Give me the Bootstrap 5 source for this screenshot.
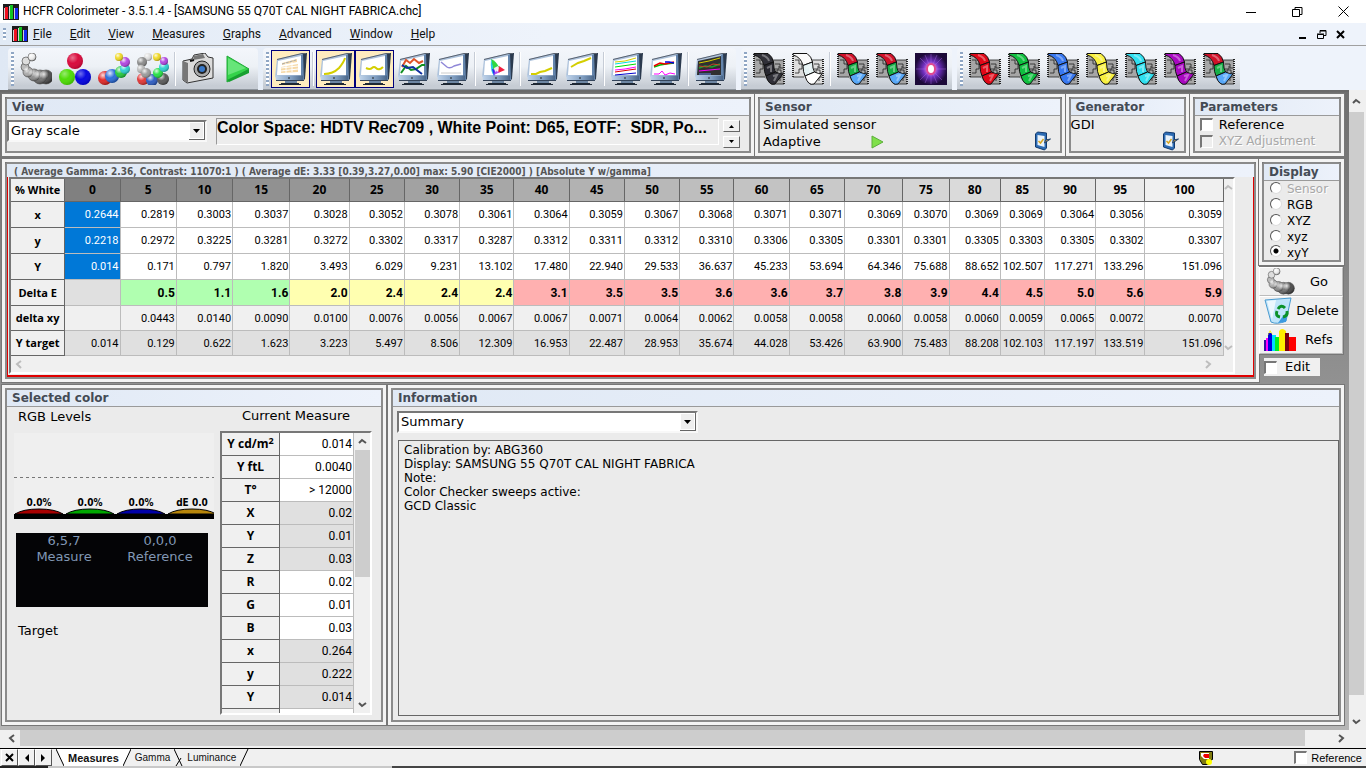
<!DOCTYPE html>
<html lang="en">
<head>
<meta charset="utf-8">
<meta name="viewport" content="width=device-width, initial-scale=1">
<title>HCFR Colorimeter</title>
<link rel="stylesheet" href="https://cdn.jsdelivr.net/npm/bootstrap@5.3.0/dist/css/bootstrap.min.css">
<script src="https://cdn.jsdelivr.net/npm/bootstrap@5.3.0/dist/js/bootstrap.bundle.min.js"></script>
<style>
:root{--ui:Roboto,"Open Sans",sans-serif;--wide:"DejaVu Sans",sans-serif}
body{font:12px/16px var(--ui);color:#000;background:#f0f0f0;overflow:hidden}
button{font:inherit;color:inherit;padding:0;border:0;background:none}
svg{display:block;flex:none}
.titlebar{height:23px;background:#fff;padding-left:3px}
.titlebar h1{font:12px/23px var(--ui);margin:0 0 0 4px}
.winbtn{width:46px;height:22px}
.menubar{height:22px;background:linear-gradient(90deg,#e1eaf5,#eef3fb 40%)}
.menubar .nav{gap:18px;margin-left:5px}
.menubar a{color:#111;text-decoration:none;line-height:24px}
.menubar a::first-letter{text-decoration:underline}
.menubar .grip{height:12px}
.mdibtn{width:19px;height:20px}
.toolbars{height:45px;gap:5px;padding:2px 0 0 8px;border-top:1px solid #a0a0a0;background:linear-gradient(90deg,#dfe8f4,#eef3fb 40%)}
.toolgroup{height:42px;padding-right:2px;border-radius:4px 4px 0 0;background:linear-gradient(#f3f6fb,#edf1f6 45%,#c6ccd4 92%);border-bottom:1px solid #8e959d}
.toolgroup:nth-child(2){padding-right:6px}
.grip{width:3px;height:34px;margin:0 2px 0 3px;background:repeating-linear-gradient(#8fa6c4 0 2px,#fff 2px 4px)}
.toolbtn{width:39px;height:38px;border:1px solid transparent}
.toolbtn.pressed{background:#ffecbf;border-color:#00007b}
.toolsep{width:2px;height:34px;margin:0 2px;border-left:1px solid #c6ccd6;border-right:1px solid #fff}
.workspace{background:linear-gradient(#6f6f6f,#8a8a8a 35%,#b6b6b6);border-top:2px solid #6a6a6a;padding:2px 5px 5px 2px;gap:3px}
.toprow{display:grid;grid-template-columns:751fr 309fr 123fr 154fr;gap:1px}
.sheet{border:3px solid #f4f4f4;outline:1px solid #777;min-width:0}
.inner{border:2px solid #8b8b8b;border-radius:4px 4px 0 0;background:#ebebeb;width:100%;min-width:0}
.inner>h2{font:bold 12px/16px var(--wide);color:#444b55;margin:0;padding-left:5px;height:17px;background:linear-gradient(90deg,#e0e9f5,#edf2fb);border-bottom:1px solid #9a9a9a;white-space:nowrap}
.wide{font-family:var(--wide);font-size:13px}
.body1{height:35px}
.sensorlines span{line-height:17px}
.combo{appearance:none;border:2px solid;border-color:#777 #f8f8f8 #f8f8f8 #777;border-radius:0;height:22px;padding:0 20px 0 2px;font:13px/16px var(--wide);color:#000;background:#fff url("data:image/svg+xml,%3Csvg xmlns='http://www.w3.org/2000/svg' width='16' height='18'%3E%3Crect width='16' height='18' fill='%23666'/%3E%3Crect width='15' height='17' fill='%23fff'/%3E%3Crect x='1' y='1' width='13' height='15' fill='%23eee'/%3E%3Cpath d='M4 7h7L7.500 11z'/%3E%3C/svg%3E") right 0 top 0 no-repeat}
.spacefield{border:1px solid;border-color:#999 #fff #fff #999;border-radius:0;background:#ededed;font:bold 16px/18px "Liberation Sans",sans-serif;height:27px;padding:0 0 8px;width:503px;margin:2px 0 0 9px}
.spin button{width:17px;height:12px;border:1px solid;border-color:#fff #666 #666 #fff;background:#f0f0f0}
input[type=checkbox].box{appearance:none;width:13px;height:13px;border:2px solid;border-width:2px 1px 1px 2px;border-color:#777 #fff #fff #777;background:#fff;margin:0;flex:none}
input.box:disabled{background:#eee!important}
.dim{color:#a8a8a8;text-shadow:1px 1px #fff}
.params label{gap:6px;padding-left:5px;line-height:17px;white-space:nowrap}
.params .dim{font-size:12px}
.inner.datapanel>h2{font:bold 10px/15px "DejaVu Sans Condensed",sans-serif;height:13px;padding-left:7px;border:0;overflow:hidden;color:#555}
.redframe{border:solid #e00000;border-width:0 1px 2px 1px;padding:0 18px 1px 1px}
.gridbox{border:2px solid;border-color:#777 #fff #fff #777;background:#f0f0f0}
.meas{table-layout:fixed;width:100%;border-collapse:separate;border-spacing:0}
.meas th{font:bold 11px/16px "Open Sans",sans-serif;text-align:center;padding:0;border:solid #666;border-width:0 1px 1px 0;background:#f0f0f0;white-space:nowrap}
.meas td{font:11px/16px var(--ui);text-align:right;padding:1px 1px 0 0;border:solid #bcbcbc;border-width:0 1px 1px 0;background:#fff;white-space:nowrap}
.meas thead th{font-size:12px}
.bigtable thead th:first-child{font-size:11px}
.bigtable thead tr{height:23px}
.bigtable tbody tr{height:26px}
.bigtable tbody tr:nth-child(n+5){height:25px}
.bigtable .sel{background:#0078d7;color:#fff}
.bigtable .good{background:#b0ffb0;font:bold 12px/16px var(--ui)}
.bigtable .fair{background:#ffffb0;font:bold 12px/16px var(--ui)}
.bigtable .poor{background:#ffb0b0;font:bold 12px/16px var(--ui)}
.bigtable .soft{background:#f0f0f0}
.bigtable .shade,.smalltable .shade{background:#e0e0e0}
.chev{fill:none;stroke:#bdbdbd;stroke-width:2}
.chev.on{stroke:#555}
.sidebar{width:85px;flex:none}
.radios label{height:16px;font:12px/16px var(--wide);gap:5px;padding-left:6px}
.radios label:last-child{height:15px}
.radios input{appearance:none;width:12px;height:12px;border-radius:50%;border:1px solid;border-color:#555 #ddd #ddd #555;background:#fff;margin:0 0 3px}
.radios input:checked{background:radial-gradient(circle,#000 0 2px,#fff 3px)}
.actions{margin-top:1px;border:1px solid #777;border-left:0}
.actions button{width:100%;height:29px;background:#f0f0f0;border:1px solid;border-color:#fff #bbb #bbb #fff;padding-left:4px;font:13px/16px var(--wide)}
.editbox{background:#f0f0f0;height:18px;width:56px;margin:3px 0 0 5px;font:13px/18px var(--wide)}
.leftpanel{width:384px}
.levels{padding:2px 9px 0 7px}
.swatch{width:192px;height:74px;margin:14px 0 0 2px;background:#040406;color:#8197b4;font:13px/16px var(--wide)}
.smallbox{width:152px;height:284px;border:2px solid;border-color:#777 #fff #fff #777;background:#f0f0f0;overflow:hidden}
.smalltable{width:132px;flex:none;align-self:flex-start}
.smalltable tr{height:23px}
.smalltable th{width:58px;font-size:12px}
.smalltable td{font-size:12px;padding:0 1px 1px 0}
.smalltable sup{font-size:9px;line-height:0}
.thumb{background:#cdcdcd}
.notes{resize:none;border:1px solid #666;border-radius:0;background:#ebebeb;font:12px/14px var(--wide);padding:2px 5px;margin:7px 0 4px 5px;outline:0}
.hbar{height:16px;margin-bottom:2px}
.tabs{height:18px;border-top:1px solid #000;background:#f0f0f0;font:11px/16px "Liberation Sans",sans-serif;padding-left:1px}
.tabs .sq{width:17px;height:17px;border:1px solid;border-color:#fff #555 #555 #fff;display:grid;place-items:center}
.sheettab{height:17px;color:#111;text-decoration:none;font-size:10px;line-height:18px}
.sheettab.active{background:#fff;font-weight:bold;font-size:11px}
.taskedge{height:2px;background:linear-gradient(90deg,#222 48px,#c8c8c8 48px 392px,#444 392px)}
</style>
</head>
<body class="d-flex flex-column vh-100">
<svg width="0" height="0" class="position-absolute" aria-hidden="true">
<defs>
<linearGradient id="bez" x1="0" x2="1"><stop offset="0" stop-color="#c3d6ec"/><stop offset=".6" stop-color="#7f9dc0"/><stop offset="1" stop-color="#4a6688"/></linearGradient>
<radialGradient id="ball" cx=".35" cy=".3" r=".7"><stop offset="0" stop-color="#fff" stop-opacity=".85"/><stop offset=".5" stop-color="#fff" stop-opacity=".05"/><stop offset="1" stop-color="#000" stop-opacity=".3"/></radialGradient>
<symbol id="logo" viewBox="0 0 16 16"><path fill="#1c1c1c" d="M0 0h16v16H0z"/><path fill="#fff" d="M1 4h1v11H1zM6 2h1v13H6zM11 4h1v11h-1z" opacity=".8"/><path fill="#f01020" d="M2 3h3v12H2z"/><path fill="#12c422" d="M7 1h3v14H7z"/><path fill="#1428f0" d="M12 4h3v11h-3z"/></symbol>
<symbol id="mon" viewBox="0 0 32 32"><path fill="#aec3dc" d="M2 6 27 0v24H0z"/><path fill="#6485ad" d="M26 2 29 0v27h-3z"/><path fill="#2b3a4e" d="M28 0h4l-2 26-1 1z"/><path fill="var(--screen,#fff)" d="M3 8 26 3v19H2z"/><path d="M2 6.500 27 .5h4" stroke="#59616e" fill="none"/><path fill="url(#bez)" d="M0 22.500h28V27H1z"/><path d="M1 27.500h28" stroke="#33445a"/><path fill="#567" d="M13 24h2v2h-2z"/><path fill="#6d86a3" d="M10 28h12v2H10z"/><path fill="#1d2733" d="M6 30h18v1H6zM4 31h22v1H4z"/></symbol>
<symbol id="film" viewBox="0 0 32 32"><path fill="var(--back,#a6a6a6)" d="M1 2h10l9 5h11v24H18l-7-7H1z"/><path fill="none" stroke="#222" stroke-width="2" stroke-dasharray="1 1" d="M1 1v24M31 6v26"/><path fill="none" stroke="#222" stroke-width=".8" d="M3 7h4v4h3v5H7v4H3M20 7h11M22 11h5v4h3M22 16h4v-3M24 20v-3h4v3h3M27 28v-4h3M1 24h11M18 31h13"/><path fill="var(--c1)" stroke="#111" d="M1 .5h14q4.500 3 5.500 8.500L11 12.500Q9 4 1 2z"/><path fill="var(--c2)" stroke="#111" d="M11 12.500 20.500 9q0 7 2 10L13 23q-2-4-2-10.500z"/><path fill="var(--c3)" stroke="#111" d="m13 23 9.500-4q4 2 7.500 2-4 5-8 10-6 2-9-8z"/><path d="m14 15 4-2v6M20 23l4-1-3 6M9 2q6 2 7 6" stroke="#fff" opacity=".35" stroke-width="2" fill="none"/></symbol>
<symbol id="grayballs" viewBox="0 0 32 32"><g stroke="#555" stroke-width=".7"><circle cx="26" cy="24" r="7" fill="#444"/><circle cx="20" cy="24" r="7" fill="#666"/><circle cx="14" cy="22" r="6" fill="#888"/><circle cx="8" cy="19" r="5" fill="#aaa"/><circle cx="5" cy="14" r="4" fill="#bbb"/><circle cx="6" cy="8" r="4" fill="#ddd"/><circle cx="12" cy="4" r="4" fill="#eee"/></g><g fill="url(#ball)"><circle cx="26" cy="24" r="7"/><circle cx="20" cy="24" r="7"/><circle cx="14" cy="22" r="6"/><circle cx="8" cy="19" r="5"/><circle cx="12" cy="4" r="4"/></g></symbol>
<symbol id="clip" viewBox="0 0 18 20"><path fill="#2d6cb4" stroke="#123a6e" d="m2 3 2-2 9 1v15l-2 2-9-3z"/><path fill="#eaf3fb" d="m4 4 7 1v11l-7-2z"/><path d="m5 10 2 2 3-4" fill="none" stroke="#d9a520" stroke-width="1.500"/><path d="m17 8-6 4 1-3z" fill="#c94" stroke="#24456e"/></symbol>
</defs>
</svg>

<header>
<div class="titlebar d-flex align-items-center">
<svg width="16" height="16"><use href="#logo"/></svg><h1>HCFR Colorimeter - 3.5.1.4 - [SAMSUNG 55 Q70T CAL NIGHT FABRICA.chc]</h1>
<div class="ms-auto d-flex">
<button class="winbtn" aria-label="Minimize"><svg class="mx-auto" width="10" height="10"><path d="M0 5.500h10" stroke="#000"/></svg></button>
<button class="winbtn" aria-label="Restore"><svg class="mx-auto" width="11" height="10" fill="none" stroke="#000"><path d="M.5 2.500h7v7h-7zM3 2V.5h7v7H8"/></svg></button>
<button class="winbtn" aria-label="Close"><svg class="mx-auto" width="11" height="11" stroke="#000"><path d="m.5.5 10 10m0-10-10 10"/></svg></button>
</div>
</div>
<div class="menubar d-flex align-items-center">
<div class="grip"></div>
<svg class="ms-1" width="16" height="16"><use href="#logo"/></svg>
<nav class="nav"><a class="d-block" href="#">File</a><a class="d-block" href="#">Edit</a><a class="d-block" href="#">View</a><a class="d-block" href="#">Measures</a><a class="d-block" href="#">Graphs</a><a class="d-block" href="#">Advanced</a><a class="d-block" href="#">Window</a><a class="d-block" href="#">Help</a></nav>
<div class="ms-auto d-flex pe-3">
<button class="mdibtn" aria-label="Minimize document"><svg class="mx-auto" width="9" height="9"><path d="M1 8h7" stroke="#000" stroke-width="2"/></svg></button>
<button class="mdibtn" aria-label="Restore document"><svg class="mx-auto" width="10" height="9" fill="none" stroke="#000"><path d="M.5 4.500h6v4h-6zM0 4h7M3 3V.5h6v5H7M3 1h6" /></svg></button>
<button class="mdibtn" aria-label="Close document"><svg class="mx-auto" width="9" height="9" stroke="#000" stroke-width="2"><path d="m1 1 7 7m0-7-7 7"/></svg></button>
</div>
</div>
<div class="toolbars d-flex" id="toolbars"></div>
</header>

<main class="d-flex flex-grow-1" style="min-height:0">
<div class="d-flex flex-column flex-grow-1" style="min-width:0">
<div class="workspace d-flex flex-column flex-grow-1">

<div class="toprow">
<section class="sheet d-flex"><div class="inner"><h2>View</h2>
<div class="body1 d-flex align-items-start"><select class="combo mt-1" style="width:200px" aria-label="View"><option>Gray scale</option></select>
<input class="spacefield" aria-label="Color space" readonly value="Color Space: HDTV Rec709 , White Point: D65, EOTF:  SDR, Po...">
<div class="spin d-flex flex-column mt-1 ms-1"><button aria-label="Up"><svg class="mx-auto" width="7" height="4"><path d="M1 4h5L3.500 1z"/></svg></button><button class="mt-1" aria-label="Down"><svg class="mx-auto" width="7" height="4"><path d="M1 0h5L3.500 3z"/></svg></button></div></div></div></section>
<section class="sheet d-flex"><div class="inner"><h2>Sensor</h2>
<div class="body1 wide d-flex justify-content-between" style="padding-left:3px"><div class="sensorlines d-flex flex-column"><span>Simulated sensor</span><span class="d-flex align-items-center">Adaptive<svg style="margin-left:50px" width="14" height="14"><path d="M1 1v12l11-6z" fill="#7fe04a" stroke="#5cae3b"/></svg></span></div><button class="align-self-end pe-2" aria-label="Configure sensor"><svg width="19" height="20"><use href="#clip"/></svg></button></div></div></section>
<section class="sheet d-flex"><div class="inner"><h2>Generator</h2>
<div class="body1 sensorlines wide d-flex justify-content-between"><span>GDI</span><button class="align-self-end pe-1" aria-label="Configure generator"><svg width="19" height="20"><use href="#clip"/></svg></button></div></div></section>
<section class="sheet d-flex"><div class="inner"><h2>Parameters</h2>
<div class="body1 params wide d-flex flex-column"><label class="d-flex align-items-center"><input type="checkbox" class="box">Reference</label><label class="d-flex align-items-center dim"><input type="checkbox" class="box" disabled>XYZ Adjustment</label></div></div></section>
</div>

<div class="d-flex">
<section class="sheet d-flex flex-grow-1"><div class="inner datapanel"><h2>( Average Gamma: 2.36, Contrast: 11070:1 ) ( Average dE: 3.33 [0.39,3.27,0.00] max: 5.90 [CIE2000] ) [Absolute Y w/gamma]</h2>
<div class="redframe"><div class="gridbox"><div class="d-flex"><div class="flex-grow-1" style="min-width:0"><table class="meas bigtable"><colgroup id="cols"></colgroup><thead><tr id="head"></tr></thead><tbody id="rows"></tbody></table></div>
<div class="d-flex flex-column justify-content-between align-items-center py-1" style="width:18px"><svg class="chev" width="9" height="9"><path d="m1 6 3-3 4 3"/></svg><svg class="chev" width="9" height="9"><path d="m1 3 3 3 4-3"/></svg></div></div>
<div class="d-flex justify-content-between align-items-center ps-1" style="height:16px;padding-right:21px"><svg class="chev" width="8" height="9"><path d="M6 1 2 4l4 4"/></svg><svg class="chev" width="8" height="9"><path d="m2 1 4 3-4 4"/></svg></div>
</div></div></div></section>
<aside class="sidebar">
<div class="sheet d-flex"><div class="inner radios"><h2>Display</h2>
<label class="d-flex align-items-center dim"><input type="radio" name="disp" disabled>Sensor</label>
<label class="d-flex align-items-center"><input type="radio" name="disp">RGB</label>
<label class="d-flex align-items-center"><input type="radio" name="disp">XYZ</label>
<label class="d-flex align-items-center"><input type="radio" name="disp">xyz</label>
<label class="d-flex align-items-center"><input type="radio" name="disp" checked>xyY</label></div></div>
<div class="actions">
<button class="d-flex align-items-center"><svg width="32" height="27"><use href="#grayballs"/></svg><span class="mx-auto">Go</span></button>
<button class="d-flex align-items-center"><svg width="29" height="27" viewBox="0 0 29 27"><path fill="#bfe4fa" stroke="#4a9bd0" d="m1 3 26-2-5 23q-9 4-15 1z"/><path fill="#fff" opacity=".7" d="m3 4 9-1-4 20z"/><path fill="#3d9be0" d="m19 19 4-3-1 9-8 1z"/><path d="M14 12q3-5 7-1M23 14q1 5-4 6M16 20q-5-1-3-6" stroke="#0b9128" stroke-width="3" fill="none"/></svg><span class="mx-auto">Delete</span></button>
<button class="d-flex align-items-center"><svg width="32" height="23" viewBox="0 0 32 23"><path fill="#3010a0" d="M0 12h3v11H0z"/><path fill="#f0f" d="M2 10h3v13H2z"/><path fill="#00d" d="M4 5h4v18H4z"/><path fill="#0df" d="M8 7h4v16H8z"/><path fill="#0e2" d="M11 9h4v14h-4z"/><path fill="#fe0" d="M3 9 6 2l3 5-3-3zM15 3q3-4 7 0v20h-7z"/><path fill="#7a0010" d="M21 5h4v18h-4z"/><path fill="#f00" d="M25 9h7v14h-7z"/></svg><span class="mx-auto">Refs</span></button>
</div>
<label class="editbox d-flex align-items-center"><input type="checkbox" class="box me-1"><span class="ms-1">Edit</span></label>
</aside>
</div>

<div class="d-flex flex-grow-1" style="gap:2px;min-height:0">
<section class="sheet leftpanel d-flex flex-shrink-0"><div class="inner"><h2>Selected color</h2>
<div class="levels d-flex justify-content-between">
<div class="wide"><div class="ps-1">RGB Levels</div>
<svg class="mt-2" width="200" height="86" font-family="DejaVu Sans Condensed,sans-serif" font-size="10" font-weight="bold" text-anchor="middle"><path fill="#efefef" d="M0 0h200v86H0z"/><path d="M0 44.500h200" stroke="#777" stroke-dasharray="3 3"/><path fill="#000" d="M0 81h200v5H0z"/><g stroke="#000"><path fill="#a80000" d="M1 81q8-5 24-5t24 5z"/><path fill="#00a800" d="M52 81q8-5 24-5t24 5z"/><path fill="#0000a8" d="M103 81q8-5 24-5t24 5z"/><path fill="#b8860b" d="M154 81q8-5 24-5t24 5z"/></g><text x="25" y="73">0.0%</text><text x="76" y="73">0.0%</text><text x="127" y="73">0.0%</text><text x="178" y="73">dE 0.0</text></svg>
<div class="swatch d-flex text-center"><div class="w-50">6,5,7<br>Measure</div><div class="w-50">0,0,0<br>Reference</div></div>
<div class="ps-1 mt-3">Target</div></div>
<div class="d-flex flex-column"><div class="wide text-center mb-2" style="line-height:14px">Current Measure</div>
<div class="smallbox d-flex"><table class="meas smalltable"><tbody>
<tr><th>Y cd/m<sup>2</sup></th><td>0.014</td></tr><tr><th>Y ftL</th><td>0.0040</td></tr><tr><th>T°</th><td>&gt; 12000</td></tr>
<tr><th>X</th><td class="shade">0.02</td></tr><tr><th>Y</th><td class="shade">0.01</td></tr><tr><th>Z</th><td class="shade">0.03</td></tr>
<tr><th>R</th><td>0.02</td></tr><tr><th>G</th><td>0.01</td></tr><tr><th>B</th><td>0.03</td></tr>
<tr><th>x</th><td class="shade">0.264</td></tr><tr><th>y</th><td class="shade">0.222</td></tr><tr><th>Y</th><td class="shade">0.014</td></tr><tr><th></th><td></td></tr></tbody></table>
<div class="d-flex flex-column align-items-center py-1 flex-grow-1"><svg class="chev on" width="9" height="9"><path d="m1 6 3-3 4 3"/></svg><div class="thumb mt-1" style="width:15px;height:127px"></div><svg class="chev on mt-auto" width="9" height="9"><path d="m1 3 3 3 4-3"/></svg></div></div></div>
</div></div></section>
<section class="sheet d-flex flex-grow-1"><div class="inner d-flex flex-column"><h2>Information</h2>
<select class="combo align-self-start" style="width:301px;margin:4px 0 0 4px" aria-label="Information"><option>Summary</option></select>
<textarea class="notes flex-grow-1" aria-label="Notes" readonly>Calibration by: ABG360
Display: SAMSUNG 55 Q70T CAL NIGHT FABRICA
Note:
Color Checker sweeps active:
GCD Classic</textarea></div></section>
</div>
</div>
<div class="hbar d-flex align-items-center justify-content-between ps-1"><svg class="chev on ms-1" width="8" height="9"><path d="M6 1 2 4l4 4"/></svg><div class="thumb flex-grow-1 h-100" style="margin:0 32px 0 4px"></div><svg class="chev on me-1" width="8" height="9"><path d="m2 1 4 3-4 4"/></svg></div>
</div>
<div class="d-flex flex-column align-items-center" style="width:19px;padding:7px 2px 22px 0"><svg class="chev on" width="9" height="9"><path d="m1 6 3-3 4 3"/></svg><div class="thumb flex-grow-1" style="width:15px;margin:6px 0 22px"></div><svg class="chev on" width="9" height="9"><path d="m1 3 3 3 4-3"/></svg></div>
</main>

<footer>
<div class="tabs d-flex align-items-center">
<button class="sq" aria-label="Close"><svg width="9" height="9" stroke="#000" stroke-width="2"><path d="m1 1 7 7m0-7-7 7"/></svg></button><button class="sq" aria-label="Previous"><svg width="5" height="8"><path d="M5 0v8L1 4z"/></svg></button><button class="sq" aria-label="Next"><svg width="5" height="8"><path d="M0 0v8l4-4z"/></svg></button>
<svg class="ms-1" width="8" height="17"><path d="M1 0h8v17z" fill="#fff"/><path d="m0 0 8 17" stroke="#000"/></svg>
<a class="sheettab active px-1" href="#">Measures</a><svg width="8" height="17"><path d="M0 0h8L0 17z" fill="#fff"/><path d="M8 0 0 17" stroke="#000"/></svg>
<a class="sheettab px-1" href="#">Gamma</a><svg width="9" height="17"><path d="m0 0 8 17M7 9 2 17" stroke="#000"/></svg>
<a class="sheettab px-1" href="#">Luminance</a><svg width="9" height="17"><path d="M8 0 0 17" stroke="#000"/></svg>
<svg class="ms-auto" width="14" height="14"><path fill="#807b10" stroke="#000" d="M.5.500h13v8h-1l-3 5h-6l-3-5z"/><path fill="#fff" d="M2 2h8v6H5L2 5z"/><path fill="#e00" d="M5 3h5v4H6L4 5z"/><circle cx="10" cy="11" r="3" fill="#ff0"/></svg>
<label class="d-flex align-items-center pe-1" style="margin-left:81px"><input type="checkbox" class="box me-1">Reference</label>
</div>
<div class="taskedge"></div>
</footer>
<script>
// Toolbar: "|" is a separator, a leading "*" marks a pressed button.
const mon = (inner, dark) => `<g style="--screen:${dark ? '#303030' : '#fff'}"><use href="#mon"/></g>` + inner;
const line = (d, c, w = 1.5) => `<path d="${d}" stroke="${c}" stroke-width="${w}" fill="none"/>`;
const film = (a, b = a, c = a, back = '#a6a6a6') => `<g style="--c1:${a};--c2:${b};--c3:${c};--back:${back}"><use href="#film"/></g>`;
const balls = list => list.map(([x, y, r, c]) => `<circle cx="${x}" cy="${y}" r="${r}" fill="${c}"/><circle cx="${x}" cy="${y}" r="${r}" fill="url(#ball)"/>`).join('');
const groups = [
 [['Gray scale', '<use href="#grayballs"/>'],
  ['Primaries', '<circle cx="16" cy="8" r="8" fill="#d8083a"/><circle cx="8" cy="24" r="8" fill="#4cdc04"/><circle cx="24" cy="24" r="8" fill="#0404e0"/><g fill="url(#ball)" opacity=".5"><circle cx="16" cy="8" r="8"/><circle cx="8" cy="24" r="8"/><circle cx="24" cy="24" r="8"/></g>'],
  ['Primaries and secondaries', balls([[7,25,7,'#e02020'],[14,23,7,'#2468d8'],[23,19,6,'#20c838'],[27,16,5,'#28d0d0'],[27,9,5,'#b040e0'],[21,4,4,'#f0d820']])],
  ['Color checker', balls([[6,26,6,'#e03030'],[15,27,6,'#2858c0'],[26,26,6,'#555'],[21,20,5,'#20e040'],[27,14,5,'#28d0d0'],[27,8,4,'#b040e0'],[20,4,4,'#f0d820'],[11,4,4,'#ddd'],[5,9,5,'#888'],[4,16,4,'#bbb'],[9,20,5,'#999']])],
  '|',
  ['Snapshot', '<path fill="#dcdcdc" stroke="#333" d="M1 8 10 6l2-4 11-2 3 4 5 1v20L5 30 1 27z"/><path fill="#777" d="m12 3 9-2 2 4-12 2zM1 8l5 2v20l-5-3z"/><circle cx="20" cy="16" r="8" fill="#aaa" stroke="#222"/><circle cx="20" cy="16" r="5" fill="#222"/><circle cx="20" cy="16" r="3" fill="#3878c8"/><path d="m8 8 4-1" stroke="#111" stroke-width="2"/>'],
  ['Run', '<path fill="#34d44a" stroke="#21a838" d="m6 3 22 13L6 29z"/><path fill="#8af09a" opacity=".6" d="m7 5 18 10L7 22z"/><path fill="#18a030" d="m6 27 22-11v4L8 29z"/>']],
 [['*Measures', mon('<path fill="#f6d9a8" d="m7 10 15-4v3L7 12zM6 14l17-3v8l-17 1z"/><path d="m6 15 17-2M6 18l17-2M11 10v10M17 9v10" stroke="#fff"/><path d="m7 11 14-4" stroke="#aaa" stroke-dasharray="3 1"/>')], '|',
  ['*Luminance', mon(line('M4 21q9 0 15-6 5-6 6-10', '#d4ce00', 2))],
  ['*Gamma', mon(line('M7 15q4 2 6 0t4 0q3 3 7-1', '#d4ce00', 2))],
  ['RGB levels', mon(line('m4 14 4-7 4 3 4-4 5 4 4-2', '#e05428', 2) + line('m3 20 5-7 5 4 5-1 6-4h3', '#109020', 2) + line('m4 12 5 3 6-1 9 7', '#1030a0', 2))],
  ['Color temperature', mon(line('m4 9 6 5q3 2 7-1l7-2', '#9088d8') + line('M4 20h20', '#ccc', 1))], '|',
  ['CIE diagram', mon('<path fill="#30d840" d="M9 6q5 2 8 8l-6 3z"/><path fill="#28c8e8" d="m9 6 2 8 1 9q-4-4-3-17z"/><path fill="#3028f0" d="m10 16 5 1-3 6z"/><path fill="#f02040" d="m17 13 6 4-7 3z"/><path fill="#b050f0" d="m12 22 1-4 5 1z"/><path fill="#f8e8f0" d="m12 15 4-2v4l-3 2z"/>')], '|',
  ['Near black', mon(line('M4 21h5l4-2 5-1 7-3', '#d4ce00', 2))],
  ['Near white', mon(line('m5 14 7-4 6-2 7-3', '#d4ce00', 2))], '|',
  ['Saturation shift', mon(line('m4 9 10-1 11-3', '#d4ce00', 1) + line('m4 11 21-3', '#0dd', 1) + line('m4 14 21-3', '#0d0', 1) + line('m4 17 10-1 11-2', '#f0f', 1) + line('m4 19 21-3', '#d00', 1) + line('m4 22 21-2', '#00c', 1))],
  ['Color shift', mon(line('m4 14 6-2 6-1 8-1', '#0b0') + line('m4 13 6-3 5 1 9-2', '#e00') + line('m15 9 4 0 5 1', '#00d') + line('M4 21h5l3-3 3 4 5-2 5 1', '#f0f', 1))], '|',
  ['Combined', mon(line('m4 10 10-2 11-3', '#d4ce00', 1) + line('m4 15 6-2 7 1 8-3', '#20a030') + line('m4 13 8 1 6-3 7 1', '#c04828', 1) + line('m4 18 21-2', '#f0f', 1) + line('M4 21h12', '#68e', 1), true)]],
 [['Black film', film('#303038', '#282830', '#303038')], ['White film', film('#fafafa', '#e4f2f4', '#fff', '#ddd')], '|',
  ['RGB film', film('#d01028', '#18b048', '#58a8f8')], ['RGB film continuous', film('#d01028', '#18b048', '#58a8f8')],
  ['Plasma', '<defs><radialGradient id="pl"><stop offset="0" stop-color="#fff"/><stop offset=".2" stop-color="#e080e0"/><stop offset=".5" stop-color="#7030c0"/><stop offset="1" stop-color="#1c0a38"/></radialGradient></defs><path fill="url(#pl)" d="M0 0h32v32H0z"/><path d="M16 1v30M1 16h30M5 5l22 22M27 5 5 27M10 2l12 28M22 2 10 30" stroke="#b070f0" opacity=".4"/><ellipse cx="16" cy="16" rx="4" ry="5" fill="#fff" stroke="#e04890" stroke-width="2"/>']],
 [['Red film', film('#e00818')], ['Green film', film('#10c040')], ['Blue film', film('#3878f0')], ['Yellow film', film('#f8f040')], ['Cyan film', film('#30e0f0')], ['Magenta film', film('#a808c0')], ['All films', film('#d01028', '#18b048', '#58a8f8')]]
];
document.getElementById('toolbars').innerHTML = groups.map(g => `<div class="toolgroup d-flex align-items-center"><div class="grip"></div>${g.map(b => b === '|' ? '<div class="toolsep"></div>' : `<button class="toolbtn ${b[0][0] === '*' ? 'pressed' : ''}" aria-label="${b[0].replace('*', '')}"><svg class="mx-auto" width="32" height="32" viewBox="0 0 32 32">${b[1]}</svg></button>`).join('')}</div>`).join('');

// Gray scale measures, one column per level of white.
const widths = [54,55,56,56,57,59,55,55,54,55,55,55,54,55,55,58,46,51,44,51,49,78];
const data = {
 'x': '0.2644 0.2819 0.3003 0.3037 0.3028 0.3052 0.3078 0.3061 0.3064 0.3059 0.3067 0.3068 0.3071 0.3071 0.3069 0.3070 0.3069 0.3069 0.3064 0.3056 0.3059',
 'y': '0.2218 0.2972 0.3225 0.3281 0.3272 0.3302 0.3317 0.3287 0.3312 0.3311 0.3312 0.3310 0.3306 0.3305 0.3301 0.3301 0.3305 0.3303 0.3305 0.3302 0.3307',
 'Y': '0.014 0.171 0.797 1.820 3.493 6.029 9.231 13.102 17.480 22.940 29.533 36.637 45.233 53.694 64.346 75.688 88.652 102.507 117.271 133.296 151.096',
 'Delta E': '- 0.5 1.1 1.6 2.0 2.4 2.4 2.4 3.1 3.5 3.5 3.6 3.6 3.7 3.8 3.9 4.4 4.5 5.0 5.6 5.9',
 'delta xy': '- 0.0443 0.0140 0.0090 0.0100 0.0076 0.0056 0.0067 0.0067 0.0071 0.0064 0.0062 0.0058 0.0058 0.0060 0.0058 0.0060 0.0059 0.0065 0.0072 0.0070',
 'Y target': '0.014 0.129 0.622 1.623 3.223 5.497 8.506 12.309 16.953 22.487 28.953 35.674 44.028 53.426 63.900 75.483 88.208 102.103 117.197 133.519 151.096'
};
const total = widths.reduce((a, b) => a + b);
document.getElementById('cols').innerHTML = widths.map(w => `<col style="width:${w / total * 100}%">`).join('');
document.getElementById('head').innerHTML = '<th scope="col">% White</th>' + Array.from({length: 21}, (_, i) => { const v = Math.round(128 + i * 5.6); return `<th scope="col" style="background:rgb(${v},${v},${v})">${i * 5}</th>`; }).join('');
const tone = (name, i, v) => name === 'Delta E' ? (v === '-' ? 'shade' : v < 2 ? 'good' : v < 3 ? 'fair' : 'poor') : name === 'delta xy' ? 'soft' : name === 'Y target' ? 'shade' : i === 0 ? 'sel' : '';
document.getElementById('rows').innerHTML = Object.entries(data).map(([n, s]) => `<tr><th scope="row">${n}</th>${s.split(' ').map((v, i) => `<td class="${tone(n, i, v)}">${v === '-' ? '' : v}</td>`).join('')}</tr>`).join('');
</script>
</body>
</html>
